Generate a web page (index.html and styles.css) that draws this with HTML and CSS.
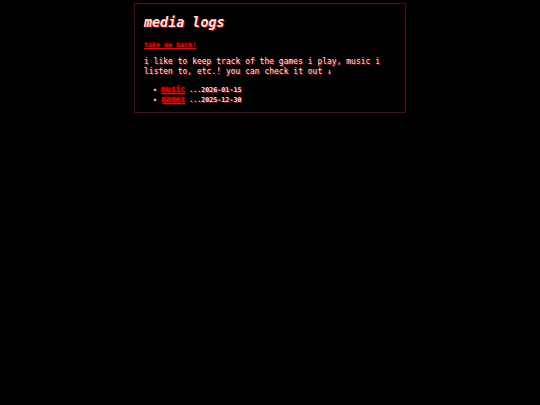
FILE: index.html
```html
<!DOCTYPE html>
<html>
<head>
    <title>media logs</title>
    <link rel="stylesheet" href="styles.css">
</head>
<body>
    <div class="box">
        <h1>media logs</h1>
        <a class="back" href="#">take me back!</a>
        <p>i like to keep track of the games i play, music i listen to, etc.! you can check it out &darr;</p>
        <ul class="logs">
            <li><a href="#">music</a> <span class="date">...2026-01-15</span></li>
            <li><a href="#">games</a> <span class="date">...2025-12-30</span></li>
        </ul>
    </div>
</body>
</html>
```

FILE: styles.css
```css
body {
    margin: 0;
    background: #000;
    color: #ffe4e4;
    font-family: "DejaVu Sans Mono", monospace;
    text-shadow: 1px 1px 0 #c00000;
}
.box {
    width: 252px;
    margin: 3px auto;
    padding: 9px 9px 7px 9px;
    border: 1px solid #5a0a0a;
}
h1 {
    font-size: 13.4px;
    font-style: italic;
    font-weight: bold;
    margin: 2px 0 10px 0;
    line-height: 16px;
}
.back {
    display: block;
    font-size: 6.7px;
    font-weight: bold;
    line-height: 8px;
}
a {
    color: #ff0000;
    text-shadow: 1px 1px 0 #6a0000;
}
p {
    font-size: 8px;
    line-height: 10px;
    margin: 8px 0 8px 0;
}
.logs {
    margin: 0;
    padding-left: 9px;
    list-style: none;
    font-size: 6.7px;
    font-weight: bold;
    line-height: 9px;
}
.logs li::before {
    content: "\2022";
    display: inline-block;
    width: 8px;
    font-size: 6px;
}
.logs a {
    font-size: 8px;
}
```
